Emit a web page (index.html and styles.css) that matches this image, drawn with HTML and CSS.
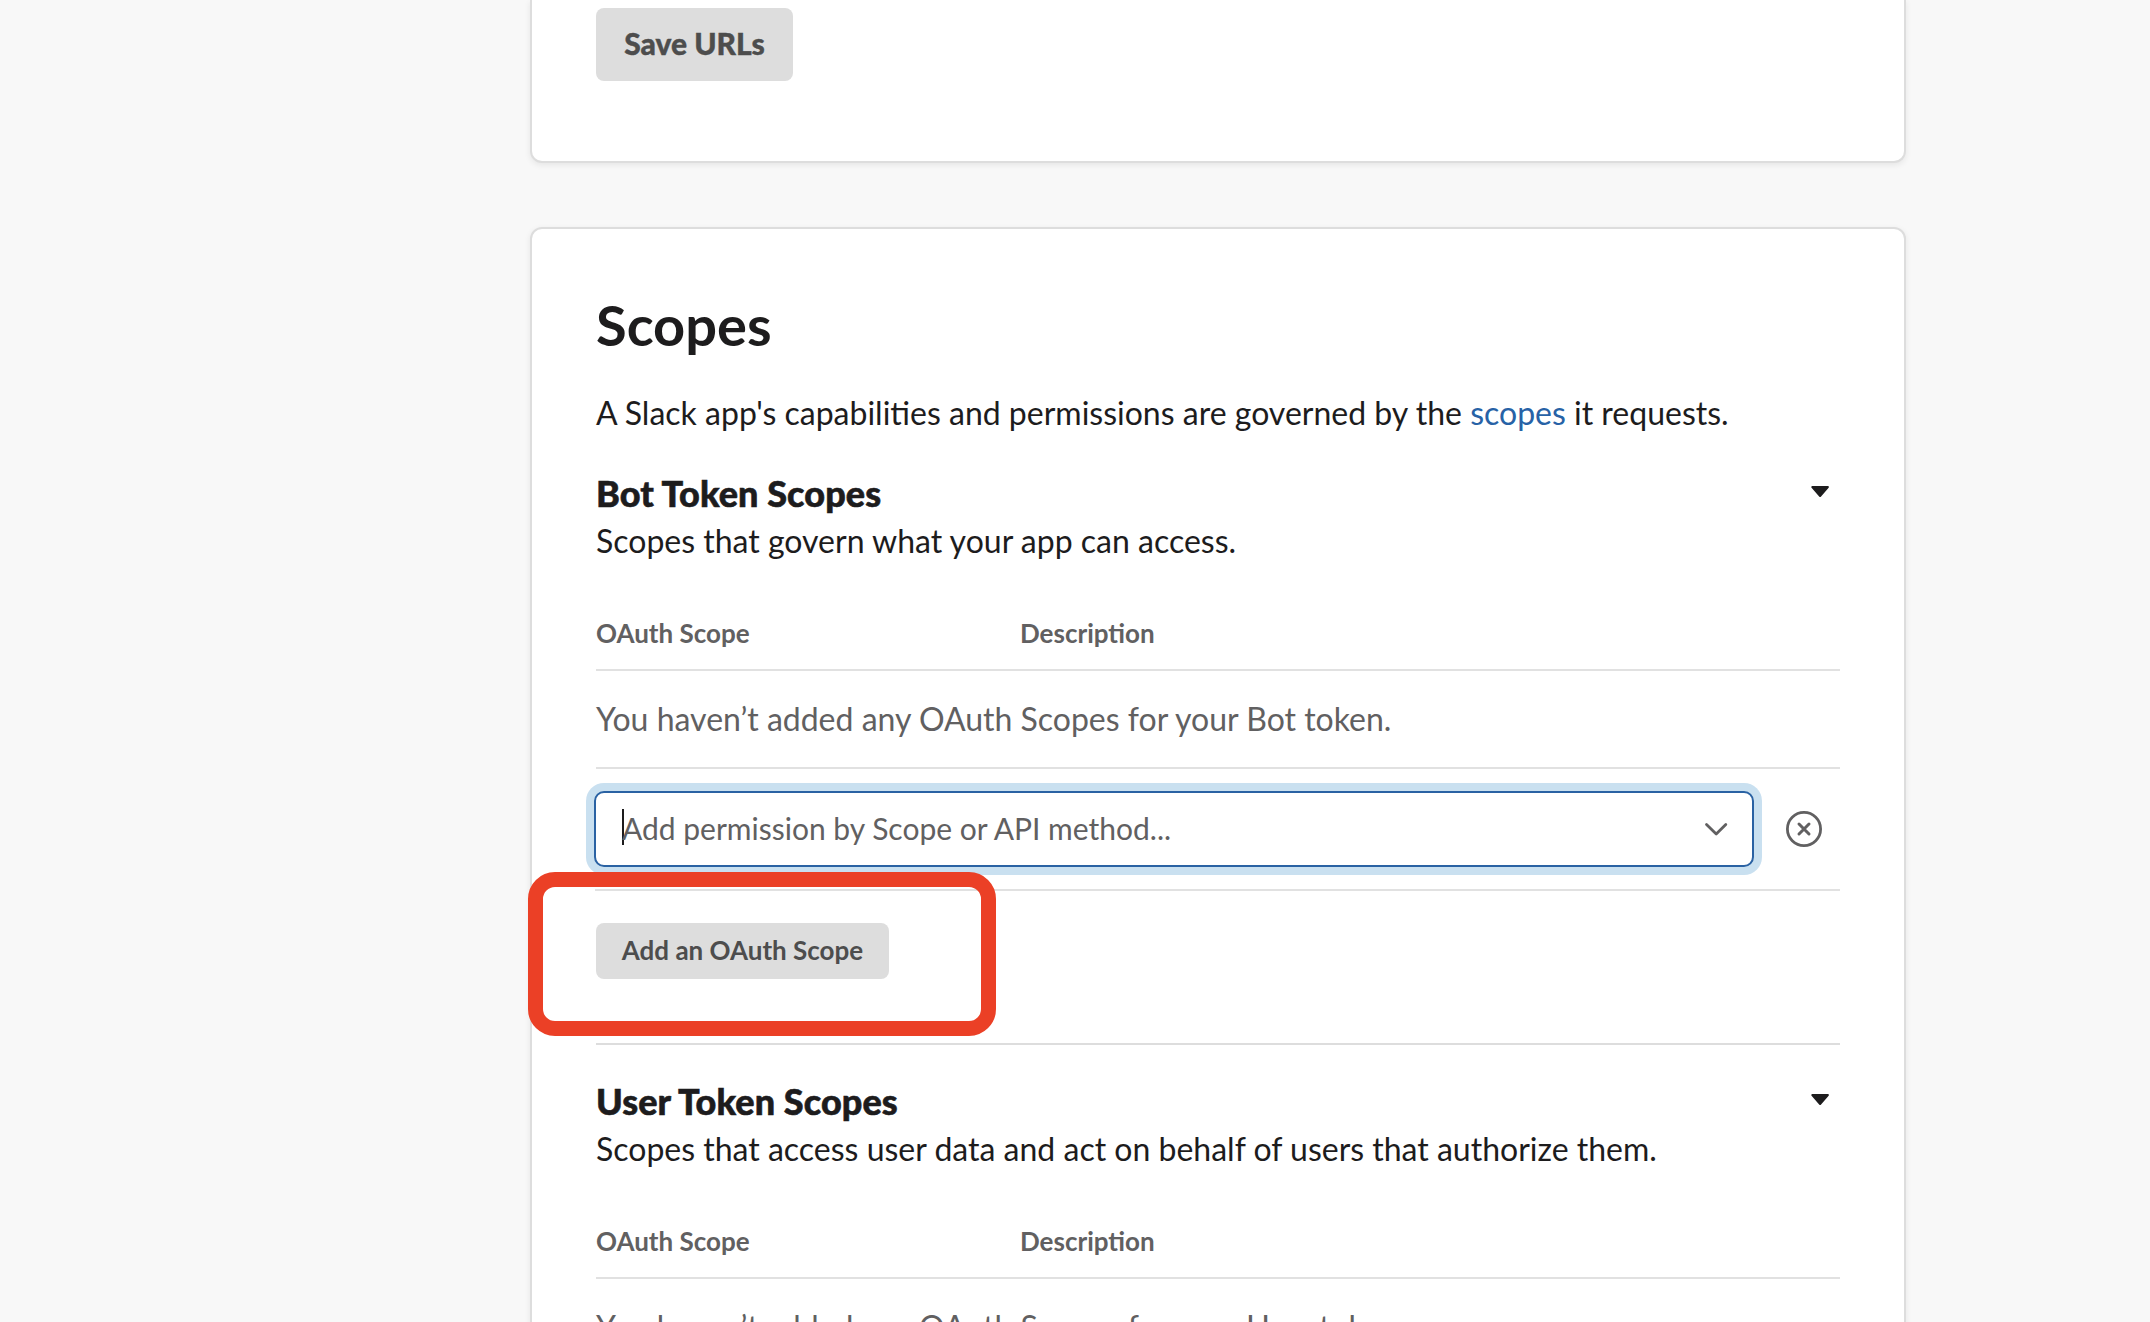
FILE: index.html
```html
<!DOCTYPE html>
<html lang="en">
<head>
<meta charset="utf-8">
<title>OAuth &amp; Permissions</title>
<link rel="stylesheet" href="styles.css">
</head>
<body>
<main class="page">
  <section class="card card-urls">
    <button class="btn btn-large">Save URLs</button>
  </section>

  <section class="card card-scopes">
    <h1 class="title">Scopes</h1>
    <p class="text intro">A Slack app's capabilities and permissions are governed by the <a class="link" href="#">scopes</a> it requests.</p>

    <section class="token-section">
      <header class="token-header">
        <h2 class="token-title">Bot Token Scopes</h2>
        <svg class="caret-down" width="20" height="14" viewBox="0 0 20 14"><path d="M2.3 2H17.9L10.1 11Z" fill="#1d1c1d" stroke="#1d1c1d" stroke-width="2" stroke-linejoin="round"/></svg>
      </header>
      <p class="text">Scopes that govern what your app can access.</p>
      <div class="table-head"><span>OAuth Scope</span><span>Description</span></div>
      <div class="text empty-row">You haven’t added any OAuth Scopes for your Bot token.</div>
      <div class="picker-row">
        <div class="select">
          <span class="cursor"></span>
          <span class="placeholder">Add permission by Scope or API method...</span>
          <svg class="chevron" width="24" height="16" viewBox="0 0 24 16"><path d="M2.5 3.4L12.2 13L21.8 3.4" fill="none" stroke="#616061" stroke-width="2.8" stroke-linecap="round" stroke-linejoin="round"/></svg>
        </div>
        <svg class="clear" width="36" height="36" viewBox="0 0 36 36" fill="none" stroke="#616061"><circle cx="18" cy="18" r="16.6" stroke-width="2.8"/><path d="M13 13L23 23M23 13L13 23" stroke-width="3" stroke-linecap="round"/></svg>
      </div>
      <div class="actions">
        <button class="btn btn-small">Add an OAuth Scope</button>
        <div class="highlight"></div>
      </div>
    </section>

    <section class="token-section">
      <header class="token-header">
        <h2 class="token-title">User Token Scopes</h2>
        <svg class="caret-down" width="20" height="14" viewBox="0 0 20 14"><path d="M2.3 2H17.9L10.1 11Z" fill="#1d1c1d" stroke="#1d1c1d" stroke-width="2" stroke-linejoin="round"/></svg>
      </header>
      <p class="text">Scopes that access user data and act on behalf of users that authorize them.</p>
      <div class="table-head"><span>OAuth Scope</span><span>Description</span></div>
      <div class="text empty-row">You haven’t added any OAuth Scopes for your User token.</div>
    </section>
  </section>
</main>
</body>
</html>
```

FILE: styles.css
```css
* { box-sizing: border-box; }

body {
  margin: 0;
  height: 1322px;
  overflow: hidden;
  background: #f8f8f8;
  color: #1d1c1d;
  font-family: Lato, sans-serif;
}

h1, h2, p { margin: 0; }

.page {
  display: flex;
  flex-direction: column;
  gap: 64px;
  width: 1376px;
  margin-left: 530px;
}

.card {
  padding: 0 64px;
  background: #fff;
  border: 2px solid #ddd;
  border-radius: 12px;
  box-shadow: 0 2px 6px rgba(0, 0, 0, 0.08);
}

.card-urls {
  height: 163px;
  padding-top: 8px;
  border-top: 0;
  border-radius: 0 0 12px 12px;
}

.card-scopes { padding-top: 62px; }

.btn {
  display: block;
  padding: 0;
  border: 0;
  border-radius: 8px;
  background: #ddd;
  color: #4d4d4d;
  font-family: inherit;
  text-align: center;
}

.btn-large {
  width: 197px;
  height: 73px;
  padding-bottom: 3px;
  font-size: 30px;
  font-weight: 900;
  -webkit-text-stroke: 0.4px #4d4d4d;
}

.btn-small {
  width: 293px;
  height: 56px;
  padding-bottom: 2px;
  font-size: 26px;
  font-weight: 700;
}

.title {
  font-size: 56px;
  line-height: 68px;
  font-weight: 700;
}

.text {
  font-size: 32px;
  line-height: 48px;
}

.intro { margin-top: 30px; }

.link {
  color: #2762a6;
  text-decoration: none;
}

.token-section {
  padding-top: 34px;
}

.token-section + .token-section { border-top: 2px solid #ddd; }

.token-header {
  display: flex;
  justify-content: space-between;
  margin-bottom: 2px;
}

.token-title {
  font-size: 36px;
  line-height: 44px;
  font-weight: 900;
  letter-spacing: 0.09px;
  -webkit-text-stroke: 0.6px #1d1c1d;
}

.caret-down {
  margin: 14px 10px 0 0;
}

.table-head {
  display: grid;
  grid-template-columns: 424px 1fr;
  margin-top: 52px;
  padding-bottom: 20px;
  border-bottom: 2px solid #e1e1e1;
  color: #616061;
  font-size: 26px;
  line-height: 32px;
  font-weight: 700;
}

.empty-row {
  padding: 24px 0;
  border-bottom: 2px solid #e1e1e1;
  color: #616061;
}

.picker-row {
  display: flex;
  align-items: center;
  gap: 32px;
  height: 122px;
  margin-left: -2px;
  border-bottom: 2px solid #e1e1e1;
  border-image: linear-gradient(to right, transparent 2px, #e1e1e1 2px) 1;
}

.select {
  display: flex;
  align-items: center;
  width: 1160px;
  height: 76px;
  padding: 0 24px 0 26px;
  border: 2px solid #2a62a3;
  border-radius: 10px;
  background: #fff;
  box-shadow: 0 0 0 8px #c9e0f0;
}

.cursor {
  width: 2px;
  height: 36px;
  margin: 0 -2px 4px 0;
  background: #1d1c1d;
}

.placeholder {
  flex: 1;
  padding-bottom: 2px;
  color: #616061;
  font-size: 30px;
  line-height: 36px;
}

.clear { flex: none; }

.actions {
  position: relative;
  padding: 32px 0 64px;
}

/* Callout frame over the button */
.highlight {
  position: absolute;
  left: -68px;
  top: -19px;
  width: 468px;
  height: 164px;
  border: 15px solid #eb4026;
  border-radius: 27px;
}
```
